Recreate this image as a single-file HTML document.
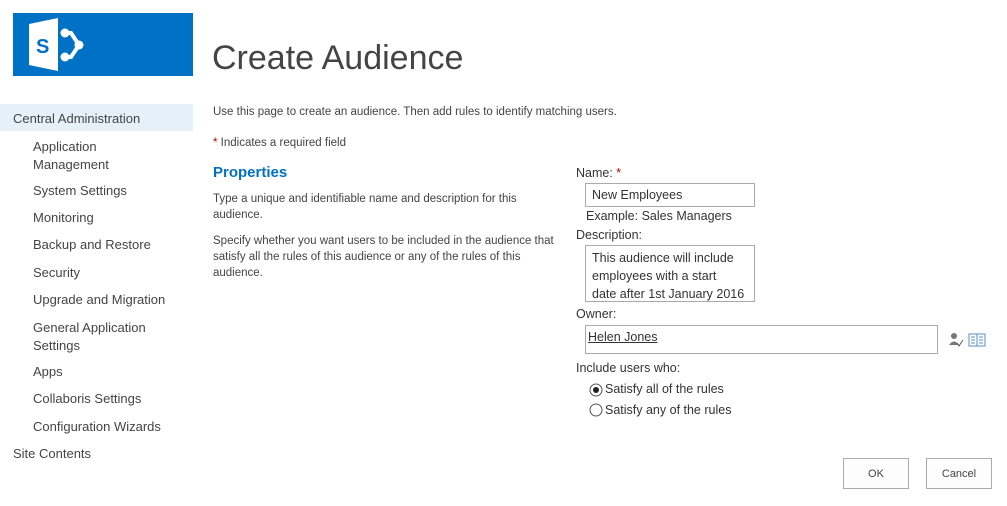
<!DOCTYPE html>
<html><head><style>
body{margin:0;width:1007px;height:506px;background:#fff;font-family:"Liberation Sans",sans-serif;color:#444;position:relative;overflow:hidden}
.a{position:absolute;white-space:nowrap}
.nav{font-size:13px;color:#444}
.s{font-size:11.5px;color:#444}
.f{font-size:12.5px;color:#333}
.box{position:absolute;border:1px solid #aaa;background:#fff}
.btn{position:absolute;border:1px solid #ababab;background:#fdfdfd;font-size:11px;color:#444;text-align:center;line-height:31px;height:29px}
</style></head><body>
<div class="a" style="left:13px;top:13px;width:180px;height:63px;background:#0072c6"></div>
<svg class="a" style="left:26px;top:16px" width="64" height="58" viewBox="0 0 64 58">
<polygon points="3,8 32,2 32,55 3,49" fill="#fff"/>
<text x="10" y="37" font-family="Liberation Sans" font-weight="bold" font-size="20" fill="#0072c6">S</text>
<path d="M39,17 L45,17 L53,29 L45,41 L39,41" stroke="#fff" stroke-width="4" fill="none"/>
<circle cx="39" cy="17" r="4.5" fill="#fff"/><circle cx="53" cy="29" r="4.5" fill="#fff"/><circle cx="39" cy="41" r="4.5" fill="#fff"/>
</svg>
<div class="a" style="left:0;top:104px;width:193px;height:27px;background:#e6f0f9"></div>
<div class="a nav" style="left:13px;top:111px">Central Administration</div>
<div class="a nav" style="left:33px;top:138px;line-height:18px">Application<br>Management</div>
<div class="a nav" style="left:33px;top:183px">System Settings</div>
<div class="a nav" style="left:33px;top:210px">Monitoring</div>
<div class="a nav" style="left:33px;top:237px">Backup and Restore</div>
<div class="a nav" style="left:33px;top:265px">Security</div>
<div class="a nav" style="left:33px;top:292px">Upgrade and Migration</div>
<div class="a nav" style="left:33px;top:319px;line-height:18px">General Application<br>Settings</div>
<div class="a nav" style="left:33px;top:364px">Apps</div>
<div class="a nav" style="left:33px;top:391px">Collaboris Settings</div>
<div class="a nav" style="left:33px;top:419px">Configuration Wizards</div>
<div class="a nav" style="left:13px;top:446px">Site Contents</div>
<div class="a" style="left:212px;top:39px;font-size:34px;color:#444">Create Audience</div>
<div class="a s" style="left:213px;top:106px">Use this page to create an audience. Then add rules to identify matching users.</div>
<div class="a s" style="left:213px;top:137px"><span style="color:#b00">*</span> Indicates a required field</div>
<div class="a" style="left:213px;top:164px;font-size:15px;color:#0072c6;font-weight:bold">Properties</div>
<div class="a s" style="left:213px;top:191px;line-height:16px">Type a unique and identifiable name and description for this<br>audience.</div>
<div class="a s" style="left:213px;top:233px;line-height:16px">Specify whether you want users to be included in the audience that<br>satisfy all the rules of this audience or any of the rules of this<br>audience.</div>
<div class="a f" style="left:576px;top:166px">Name: <span style="color:#b00">*</span></div>
<div class="box" style="left:585px;top:183px;width:168px;height:22px"></div>
<div class="a f" style="left:592px;top:188px">New Employees</div>
<div class="a f" style="left:586px;top:209px">Example: Sales Managers</div>
<div class="a f" style="left:576px;top:228px">Description:</div>
<div class="box" style="left:585px;top:245px;width:168px;height:55px"></div>
<div class="a f" style="left:592px;top:249px;line-height:18px">This audience will include<br>employees with a start<br>date after 1st January 2016</div>
<div class="a f" style="left:576px;top:307px">Owner:</div>
<div class="box" style="left:585px;top:325px;width:351px;height:27px"></div>
<div class="a f" style="left:588px;top:330px;text-decoration:underline">Helen Jones</div>
<svg class="a" style="left:948px;top:331px" width="40" height="18"><circle cx="6" cy="5" r="3" fill="#777"/><path d="M1,14 Q6,7 11,14Z" fill="#777"/><path d="M9,12 L11,15 L15,9" stroke="#555" fill="none"/><rect x="21" y="3" width="16" height="12" fill="none" stroke="#5a8fc6"/><line x1="29" y1="3" x2="29" y2="15" stroke="#5a8fc6"/><path d="M23,6h4M23,9h4M23,12h4M31,6h4M31,9h4M31,12h4" stroke="#5a8fc6"/></svg>
<div class="a f" style="left:576px;top:361px">Include users who:</div>
<svg class="a" style="left:589px;top:383px" width="14" height="14"><circle cx="7" cy="7" r="6" fill="#fff" stroke="#555"/><circle cx="7" cy="7" r="3" fill="#222"/></svg>
<div class="a f" style="left:605px;top:382px">Satisfy all of the rules</div>
<svg class="a" style="left:589px;top:403px" width="14" height="14"><circle cx="7" cy="7" r="6" fill="#fff" stroke="#555"/></svg>
<div class="a f" style="left:605px;top:403px">Satisfy any of the rules</div>
<div class="btn" style="left:843px;top:458px;width:64px">OK</div>
<div class="btn" style="left:926px;top:458px;width:64px">Cancel</div>
</body></html>
